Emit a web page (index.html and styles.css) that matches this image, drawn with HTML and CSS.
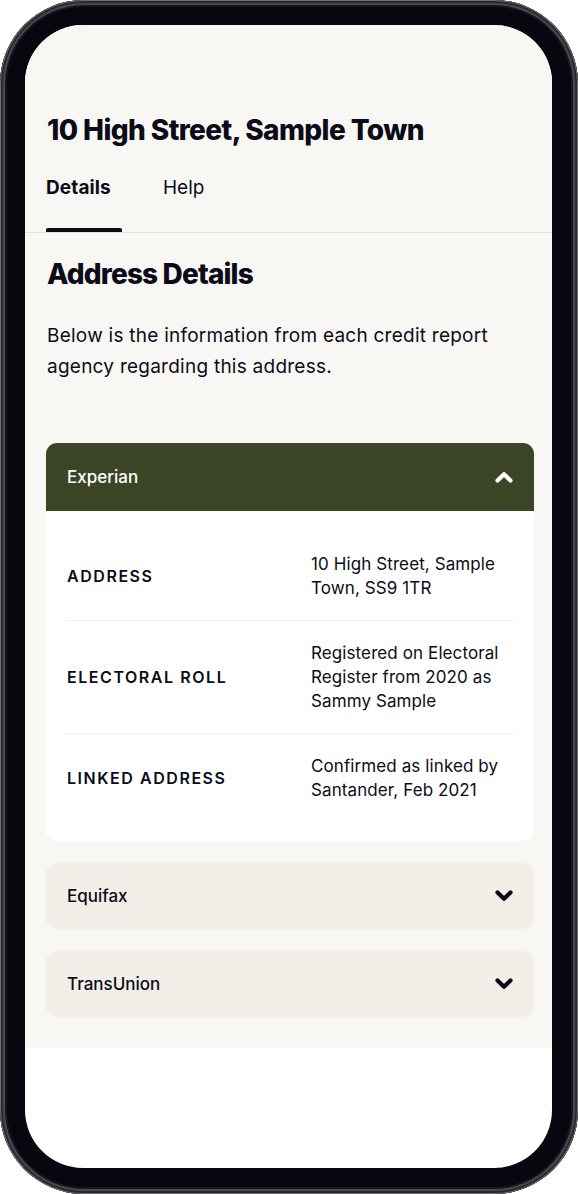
FILE: index.html
```html
<!DOCTYPE html>
<html lang="en">
<head>
<meta charset="utf-8">
<title>10 High Street, Sample Town</title>
<link rel="stylesheet" href="styles.css">
</head>
<body>
<div class="phone">
  <div class="screen">
    <div class="content">
      <header class="page-head">
        <h1 class="title">10 High Street, Sample Town</h1>
        <nav class="tabs">
          <a class="tab active">Details</a>
          <a class="tab">Help</a>
        </nav>
      </header>
      <main class="main">
        <h2 class="heading">Address Details</h2>
        <p class="intro">Below is the information from each credit report agency regarding this address.</p>

        <section class="acc open">
          <div class="acc-head">
            <span class="acc-title">Experian</span>
            <svg class="chev" width="18" height="12" viewBox="0 0 18 12"><path d="M2.5 9.5 L9 3.2 L15.5 9.5" fill="none" stroke="currentColor" stroke-width="4.2" stroke-linejoin="round" stroke-linecap="round"/></svg>
          </div>
          <div class="acc-body">
            <div class="row">
              <div class="label">ADDRESS</div>
              <div class="value">10 High Street, Sample Town, SS9 1TR</div>
            </div>
            <div class="row">
              <div class="label">ELECTORAL ROLL</div>
              <div class="value">Registered on Electoral Register from 2020 as Sammy Sample</div>
            </div>
            <div class="row">
              <div class="label">LINKED ADDRESS</div>
              <div class="value">Confirmed as linked by Santander, Feb 2021</div>
            </div>
          </div>
        </section>

        <section class="acc">
          <div class="acc-head">
            <span class="acc-title">Equifax</span>
            <svg class="chev" width="18" height="12" viewBox="0 0 18 12"><path d="M2.5 2.5 L9 8.8 L15.5 2.5" fill="none" stroke="currentColor" stroke-width="4.2" stroke-linejoin="round" stroke-linecap="round"/></svg>
          </div>
        </section>

        <section class="acc">
          <div class="acc-head">
            <span class="acc-title">TransUnion</span>
            <svg class="chev" width="18" height="12" viewBox="0 0 18 12"><path d="M2.5 2.5 L9 8.8 L15.5 2.5" fill="none" stroke="currentColor" stroke-width="4.2" stroke-linejoin="round" stroke-linecap="round"/></svg>
          </div>
        </section>
      </main>
    </div>
  </div>
</div>
</body>
</html>
```

FILE: styles.css
```css
* { box-sizing: border-box; }
html, body { margin: 0; padding: 0; background: #ffffff; }
body {
  font-family: Inter, "Noto Sans", "Liberation Sans", sans-serif;
  color: #0b0c17;
  width: 578px;
  height: 1194px;
  overflow: hidden;
}
.phone {
  width: 578px;
  height: 1194px;
  border-radius: 84px;
  background: #07080f;
  padding: 25px 26px 26px 25px;
  box-shadow:
    inset 0 0 0 1px #6b6c70,
    inset 0 0 0 3px #2a2b31,
    inset 0 0 0 5px #48494e,
    inset 0 0 0 7px #15161d;
}
.screen {
  height: 100%;
  border-radius: 58px;
  overflow: hidden;
  background: #ffffff;
}
.content {
  background: #f8f7f4;
  padding-bottom: 31px;
}
.page-head {
  padding-top: 88px;
}
.title {
  margin: 0 0 29px 22px;
  font-size: 28px;
  line-height: 34px;
  font-weight: 800;
  letter-spacing: -0.6px;
}
.tabs {
  display: flex;
  gap: 41px;
  padding-left: 21px;
  border-bottom: 1.5px solid #e3e1dd;
}
.tab {
  font-size: 19px;
  line-height: 24px;
  font-weight: 400;
  letter-spacing: 0;
  padding-bottom: 32px;
  position: relative;
}
.tab.active {
  font-weight: 700;
  letter-spacing: 0.1px;
  min-width: 76px;
}
.tab.active::after {
  content: "";
  position: absolute;
  left: 0;
  right: 0;
  bottom: 0;
  height: 4px;
  border-radius: 2px 2px 0 0;
  background: #0b0c17;
}
.main {
  padding: 24px 18px 0 21px;
}
.heading {
  margin: 0 0 29px 1px;
  font-size: 28px;
  line-height: 34px;
  font-weight: 800;
  letter-spacing: -0.85px;
}
.intro {
  margin: 0 0 61px 1px;
  font-size: 19px;
  line-height: 31px;
  letter-spacing: 0.25px;
}
.acc {
  border-radius: 11px;
  background: #f3eee8;
  overflow: hidden;
  margin-bottom: 22px;
}
.acc:last-child { margin-bottom: 0; }
.acc-head {
  display: flex;
  align-items: center;
  justify-content: space-between;
  height: 66px;
  padding: 0 21px 0 21px;
}
.acc-title {
  font-size: 17px;
  font-weight: 500;
  letter-spacing: 0;
}
.chev { display: block; color: #0b0c17; }
.acc.open { background: #ffffff; }
.acc.open .acc-head {
  height: 68px;
  background: #3c4525;
  color: #ffffff;
}
.acc.open .chev { color: #ffffff; }
.acc-body {
  padding: 20px 20px 19px 21px;
}
.row {
  display: flex;
  align-items: center;
  padding: 20px 0;
  border-bottom: 1.5px solid #f1ece6;
}
.row:first-child { padding-top: 21px; }
.row:last-child { border-bottom: none; }
.label {
  width: 244px;
  flex: none;
  font-size: 16px;
  font-weight: 600;
  letter-spacing: 1.55px;
}
.value {
  flex: 1;
  font-size: 17px;
  line-height: 24px;
  letter-spacing: 0.1px;
}
```
